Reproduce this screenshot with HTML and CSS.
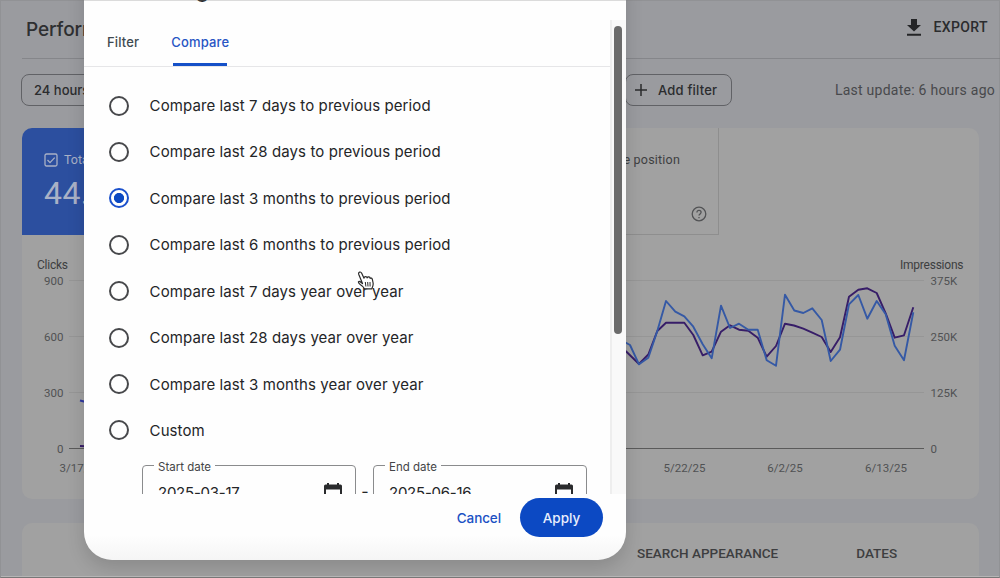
FILE: index.html
```html
<!DOCTYPE html>
<html lang="en">
<head>
<meta charset="utf-8">
<title>Performance</title>
<link rel="stylesheet" href="styles.css">
</head>
<body>
<div class="page">
  <header class="topbar">
    <h1 class="page-title">Performance</h1>
    <div class="export">
      <svg width="14" height="17" viewBox="0 0 14 17"><path d="M4 0h6v6h4l-7 6.5L0 6h4zM0 14.7h14v2H0z" fill="#242527"/></svg>
      <span>EXPORT</span>
    </div>
  </header>
  <div class="filters">
    <div class="chip chip-range">24 hours</div>
    <div class="chip chip-add">
      <svg width="12" height="12" viewBox="0 0 12 12"><path d="M6 0v12M0 6h12" stroke="#2b2c2e" stroke-width="1.5"/></svg>
      <span>Add filter</span>
    </div>
    <div class="updated">Last update: 6 hours ago</div>
  </div>
  <section class="card chart-card">
    <div class="metrics">
      <div class="metric metric-clicks">
        <div class="metric-label">
          <svg width="14" height="14" viewBox="0 0 14 14" fill="none" stroke="#a9b1c6" stroke-width="1.3"><rect x="1" y="1" width="12" height="12" rx="1.5"/><path d="M3.5 7l2.5 2.6 4.7-5"/></svg>
          <span>Total clicks</span>
        </div>
        <div class="metric-value">44.1K</div>
      </div>
      <div class="metric metric-position">
        <div class="position-label">Average position</div>
        <svg class="help" width="16" height="16" viewBox="0 0 16 16" fill="none" stroke="#525355" stroke-width="1.3"><circle cx="8" cy="8" r="6.8"/><path d="M5.9 6.5c0-1.3.9-2.1 2.1-2.1s2.1.8 2.1 1.9c0 1.5-2.1 1.7-2.1 3.3M8 11v1.3"/></svg>
      </div>
    </div>
    <svg class="chart" width="957" height="264" viewBox="22 235 957 264">
      <g class="grid"><path d="M69 280.5H924M69 336.5H924M69 392.5H924"/></g>
      <path class="axis" d="M69 448.5H924"/>
      <g class="chart-text">
        <text x="37" y="269" textLength="31">Clicks</text>
        <text x="63.500" y="285" text-anchor="end" class="muted">900</text>
        <text x="63.500" y="341" text-anchor="end" class="muted">600</text>
        <text x="63.500" y="396.500" text-anchor="end" class="muted">300</text>
        <text x="63.500" y="452.500" text-anchor="end" class="muted">0</text>
        <text x="59.500" y="472" class="muted">3/17/25</text>
        <text x="900" y="269" textLength="63.500">Impressions</text>
        <text x="930.500" y="285" class="muted">375K</text>
        <text x="930.500" y="341" class="muted">250K</text>
        <text x="930.500" y="396.500" class="muted">125K</text>
        <text x="930.500" y="452.500" class="muted">0</text>
        <text x="684.500" y="472" text-anchor="middle" class="muted">5/22/25</text>
        <text x="785" y="472" text-anchor="middle" class="muted">6/2/25</text>
        <text x="886" y="472" text-anchor="middle" class="muted">6/13/25</text>
      </g>
      <polyline class="impressions" points="80,446 90,446.500"/>
      <polyline class="clicks start" points="80,400.500 90,403"/>
      <polyline class="impressions" points="621,347 626.700,352 639,364 648.300,354.500 657.300,331 666,322.700 684.300,322.700 693.300,335 702.700,355.300 711.700,351.700 721,331.700 730,325.300 739,329.700 748.300,330.700 757.700,337.700 766.700,356.700 776,346 785,323.700 794,325.500 803.300,328.700 812.300,332.700 821.700,337 830.700,352 840,337.300 849,296.700 858.300,289.700 867.300,288.300 876.700,293 885.700,313.300 894.700,337.700 904,335.300 913.300,307.300"/>
      <polyline class="clicks" points="621,340 630,345 639,364.300 648.300,357.700 657.300,331 666,301 675.300,311.700 684.300,316.300 693.300,326.700 702.700,344.300 711.700,358.300 721,305.700 730,328 739,323.700 748.300,329.700 757.700,329.700 766.700,360.300 776,365.700 785,294.700 794.300,310.500 803.300,313 812.300,308.300 821.700,320 830.700,361 840,349.700 849,304.300 858.300,295 867.300,318.700 876.700,301 885.700,314.300 894.700,345.700 904,360.300 913.300,312.300"/>
    </svg>
  </section>
  <section class="card table-card">
    <span class="tab-appearance">SEARCH APPEARANCE</span>
    <span class="tab-dates">DATES</span>
  </section>
</div>

<div class="dialog">
  <h2 class="dialog-title">Date range</h2>
  <div class="dialog-middle">
    <div class="dialog-content">
      <nav class="tabs">
        <div class="tab">Filter</div>
        <div class="tab tab-active">Compare</div>
      </nav>
      <div class="options">
        <div class="option"><i class="radio"></i><span>Compare last 7 days to previous period</span></div>
        <div class="option"><i class="radio"></i><span>Compare last 28 days to previous period</span></div>
        <div class="option"><i class="radio checked"></i><span>Compare last 3 months to previous period</span></div>
        <div class="option"><i class="radio"></i><span>Compare last 6 months to previous period</span></div>
        <div class="option"><i class="radio"></i><span>Compare last 7 days year over year</span></div>
        <div class="option"><i class="radio"></i><span>Compare last 28 days year over year</span></div>
        <div class="option"><i class="radio"></i><span>Compare last 3 months year over year</span></div>
        <div class="option"><i class="radio"></i><span>Custom</span></div>
        <div class="dates">
          <fieldset class="field">
            <legend>Start date</legend>
            <div class="field-row"><span>2025-03-17</span>
              <svg width="18" height="20" viewBox="0 0 18 20"><path d="M3 0h2v1.500h8V0H15v1.500h1.500Q18 1.500 18 3V20H0V3Q0 1.500 1.500 1.500H3zM2 6.500V18h14V6.500z" fill="#2a2b2d" fill-rule="evenodd"/></svg>
            </div>
          </fieldset>
          <span class="dash">-</span>
          <fieldset class="field">
            <legend>End date</legend>
            <div class="field-row"><span>2025-06-16</span>
              <svg width="18" height="20" viewBox="0 0 18 20"><path d="M3 0h2v1.500h8V0H15v1.500h1.500Q18 1.500 18 3V20H0V3Q0 1.500 1.500 1.500H3zM2 6.500V18h14V6.500z" fill="#2a2b2d" fill-rule="evenodd"/></svg>
            </div>
          </fieldset>
        </div>
      </div>
    </div>
    <div class="scrollbar"><div class="thumb"></div></div>
  </div>
  <footer class="actions">
    <span class="cancel">Cancel</span>
    <span class="apply">Apply</span>
  </footer>
</div>
<svg class="cursor" width="18" height="20" viewBox="0 0 18 20"><path d="M5.500 12.500L1.800 3.400Q1.200 1.500 2.600 1.100T4.700 2.200L7 7.200Q7.200 5.600 8.600 5.600T10.200 6.800Q10.600 5.700 11.800 5.900T13.200 7.300Q14.700 6.600 15.300 8.200L16.100 12Q16.500 14.500 14.800 17.800H7.500Q6.300 15.500 3.500 13.700 1.200 12 1.400 10.800 2.500 9.500 5.500 12.500z" fill="#fff" stroke="#2a2a2a" stroke-width="1.200" stroke-linejoin="round"/><path d="M8.300 11l.6 4.500M10.700 11l.3 4.500M13 11l.1 4.500" stroke="#2a2a2a" stroke-width="1"/></svg>
<div class="frame"></div>
</body>
</html>
```
FILE: styles.css
```css
* { box-sizing: border-box; }
body {
  margin: 0;
  width: 1000px;
  height: 578px;
  overflow: hidden;
  position: relative;
  font-family: Roboto, "Liberation Sans", sans-serif;
  color: #3a3b3d;
}
.page {
  height: 578px;
  overflow: hidden;
  padding: 0 21px 0 22px;
  background: #9a9b9f;
}
.topbar {
  display: flex;
  justify-content: space-between;
  height: 59px;
  margin-right: -21px;
  padding: 0 12px 0 4px;
  border-bottom: 1px solid #85868a;
}
.page-title {
  margin: 0;
  font: 500 19px/59px Inter, sans-serif;
  letter-spacing: -0.1px;
  color: #2e2f31;
}
.export {
  display: flex;
  align-items: center;
  gap: 12px;
  height: 54px;
  font-size: 14px;
  font-weight: 500;
  letter-spacing: 0.4px;
  color: #2b2c2e;
}
.filters {
  display: flex;
  align-items: center;
  height: 70px;
  margin-right: -21px;
  padding: 0 5px 8px 0;
}
.chip {
  display: flex;
  align-items: center;
  height: 32px;
  border: 1px solid #616266;
  border-radius: 8px;
  font: 500 13px Inter, sans-serif;
  color: #2b2c2e;
}
.chip-range { width: 120px; margin-left: -1px; padding-left: 12px; }
.chip-add { width: 107px; margin-left: 484px; padding-left: 9px; gap: 11px; letter-spacing: 0.2px; }
.updated { margin-left: auto; font-size: 14px; letter-spacing: 0.25px; white-space: nowrap; color: #48494c; }
.card { background: #a1a1a1; border-radius: 10px; overflow: hidden; }
.chart-card { height: 371px; margin-top: -1px; }
.metrics { display: flex; height: 107px; justify-content: space-between; }
.metric-clicks { width: 174px; padding: 24px 22px; background: #2c4f9f; color: #a9b1c6; }
.metric-label { display: flex; align-items: center; gap: 6px; height: 15px; font-size: 12.500px; }
.metric-value { margin-top: 7px; font-size: 32px; line-height: 38px; letter-spacing: 0.4px; }
.metric-position {
  display: flex;
  flex-direction: column;
  justify-content: space-between;
  align-items: flex-end;
  width: 174px;
  margin-right: 260px;
  padding: 23px 11px 12px;
  border-right: 1px solid #8e8e8e;
  border-bottom: 1px solid #8e8e8e;
}
.position-label { padding-right: 27px; font-size: 12.500px; line-height: 17px; letter-spacing: 0.2px; color: #3e3f41; }
.chart { display: block; }
.grid { stroke: #969696; }
.axis { stroke: #5a5a5a; }
.chart-text { font-size: 12px; fill: #3d3e40; }
.muted { fill: #505153; font-size: 11.500px; }
.clicks, .impressions { fill: none; stroke-width: 1.900; stroke-linejoin: round; }
.clicks { stroke: #3559a5; }
.clicks.start { stroke: #3038a0; }
.impressions { stroke: #371d68; }
.table-card {
  display: flex;
  height: 80px;
  margin-top: 24px;
  padding: 22px 0 0 615px;
  gap: 78px;
  font-size: 13.500px;
  font-weight: 500;
  line-height: 17px;
  color: #3d3e40;
}
.dialog {
  position: absolute;
  left: 84px;
  top: -40px;
  width: 542px;
  height: 600px;
  overflow: hidden;
  border-radius: 28px;
  background: linear-gradient(#fefefe 575px, #f5f5f5 600px);
  box-shadow: 0 8px 18px rgba(0, 0, 0, .14);
  font-family: Inter, sans-serif;
  color: #242527;
}
.dialog-title {
  height: 60px;
  margin: 0;
  padding: 16px 0 0 23px;
  font-size: 22px;
  font-weight: 500;
  line-height: 26px;
}
.dialog-middle { display: flex; height: 474px; overflow: hidden; }
.dialog-content { flex: 1; }
.tabs {
  display: flex;
  gap: 32px;
  height: 47px;
  padding-left: 23px;
  border-bottom: 1px solid #e6e6e8;
  font-size: 13px;
  font-weight: 500;
  letter-spacing: 0.15px;
  line-height: 44px;
  color: #3f4a50;
}
.tab-active {
  height: 46px;
  color: #2855c4;
  background: linear-gradient(#1550c8, #1550c8) center bottom / 54px 3px no-repeat;
}
.options { padding: 15.300px 22px 0 25px; }
.option { display: flex; align-items: center; height: 46.430px; gap: 20.600px; font-size: 15px; letter-spacing: 0.09px; white-space: nowrap; }
.radio { width: 20px; height: 20px; border: 2px solid #47484b; border-radius: 50%; }
.radio.checked { border-color: #1a50cc; background: radial-gradient(circle, #0b48c2 4.700px, #fff 5.400px); }
.dates { display: flex; padding: 4px 0 0 33px; }
.field {
  width: 214px;
  height: 56px;
  margin: 0;
  padding: 0 13px 0 11px;
  border: 1px solid #8a8b8d;
  border-radius: 4px;
}
.field legend { margin: 0; padding: 3px 4px 0; font-size: 11.500px; line-height: 13px; color: #444547; }
.field-row { display: flex; justify-content: space-between; padding: 8px 0 0 4px; font-size: 15px; line-height: 22px; letter-spacing: -0.25px; }
.field-row svg { margin-top: 1px; }
.dash { width: 17px; padding: 23px 0 0 1px; text-align: center; line-height: 20px; }
.actions { display: flex; justify-content: flex-end; padding: 4px 23px 0 0; font-size: 14px; font-weight: 500; line-height: 40px; }
.cancel { margin-right: 19px; color: #1b51c4; font-size: 13.500px; letter-spacing: -0.1px; }
.apply { width: 83px; height: 39px; border-radius: 20px; background: #0c49c3; color: #e8eefc; font-size: 13.500px; text-align: center; }
.scrollbar { width: 16px; padding: 6px 0 0 2px; border-left: 2px solid #eee; background: #f9f9f9; }
.thumb { width: 8px; height: 308px; border-radius: 4px; background: #6b6b6b; }
.cursor { position: absolute; left: 357px; top: 271px; }
.frame {
  position: absolute;
  inset: 0;
  border: 1px solid rgba(120, 120, 120, .25);
  border-bottom: 1px solid #777;
  box-shadow: inset 0 -1px #b5b5b5;
}
```
